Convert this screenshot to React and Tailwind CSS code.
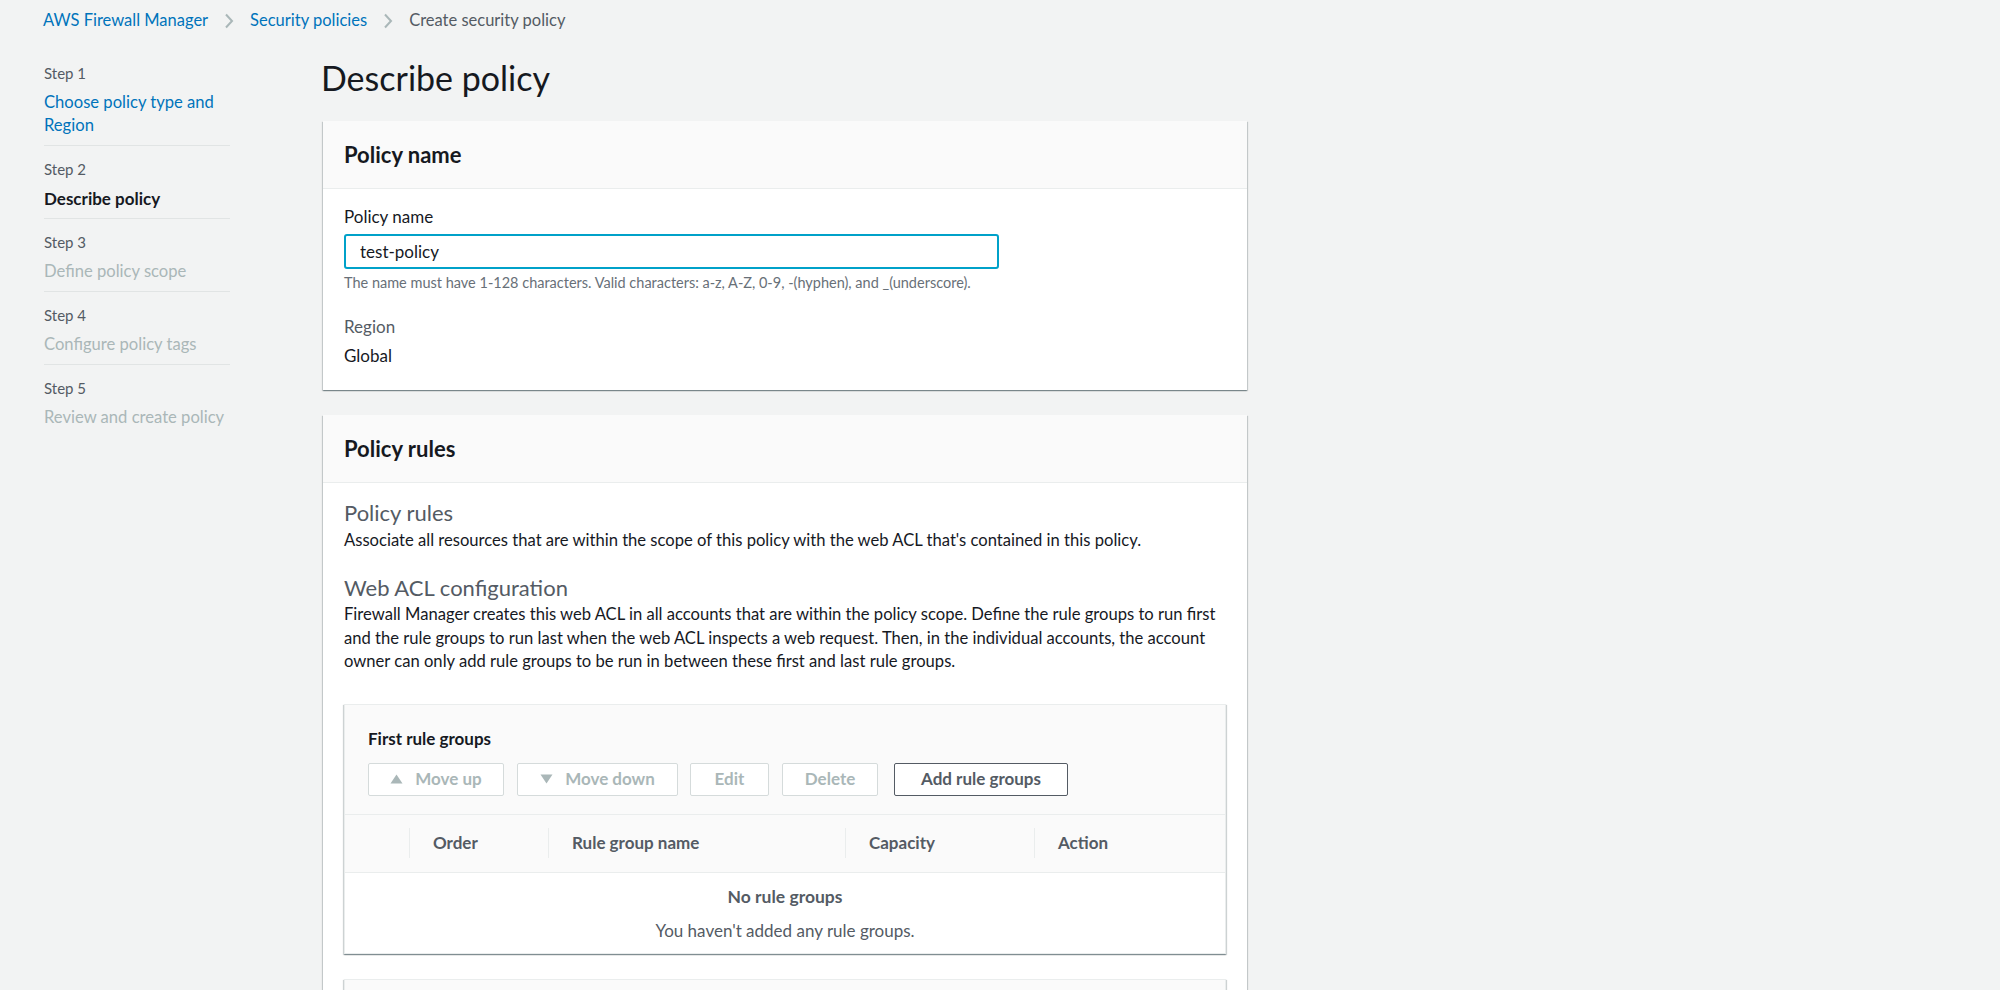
import React from 'react';

const cardShadow =
  'shadow-[0_1px_1px_0_rgba(0,28,36,0.3),1px_1px_1px_0_rgba(0,28,36,0.15),-1px_1px_1px_0_rgba(0,28,36,0.15)]';

const Chevron = () => (
  <svg width="10" height="16" viewBox="0 0 10 16" className="mx-[16px]" fill="none">
    <path d="M2 1.5 L8 8 L2 14.5" stroke="#aab7b8" strokeWidth="2" />
  </svg>
);

const TriangleUp = () => (
  <svg width="13" height="10" viewBox="0 0 13 10">
    <path d="M6.5 0.5 L12.5 9.5 L0.5 9.5 Z" fill="#aab7b8" />
  </svg>
);

const TriangleDown = () => (
  <svg width="13" height="10" viewBox="0 0 13 10">
    <path d="M0.5 0.5 L12.5 0.5 L6.5 9.5 Z" fill="#aab7b8" />
  </svg>
);

const steps = [
  { label: 'Step 1', title: 'Choose policy type and Region', state: 'link' },
  { label: 'Step 2', title: 'Describe policy', state: 'current' },
  { label: 'Step 3', title: 'Define policy scope', state: 'disabled' },
  { label: 'Step 4', title: 'Configure policy tags', state: 'disabled' },
  { label: 'Step 5', title: 'Review and create policy', state: 'disabled' },
];

const columns = [
  { name: '', width: 'w-[64px]' },
  { name: 'Order', width: 'w-[139px]' },
  { name: 'Rule group name', width: 'w-[297px]' },
  { name: 'Capacity', width: 'w-[189px]' },
  { name: 'Action', width: 'flex-1' },
];

const DisabledButton = ({ width, icon, children }) => (
  <button
    className={`${width} h-[33px] flex items-center justify-center gap-[12px] bg-white border border-[#d5dbdb] rounded-[2px] text-[17px] font-bold text-[#aab7b8]`}
  >
    {icon}
    <span>{children}</span>
  </button>
);

const RuleGroupTable = ({ title }) => (
  <div className={`bg-white border border-[#eaeded] ${cardShadow}`}>
    <div className="bg-[#fafafa] pt-[22px] px-[23px] pb-[18px] border-b border-[#eaeded]">
      <h3 className="text-[17px] leading-[23px] font-bold">{title}</h3>
      <div className="mt-[13px] flex items-center">
        <DisabledButton width="w-[136px]" icon={<TriangleUp />}>Move up</DisabledButton>
        <div className="ml-[13px]">
          <DisabledButton width="w-[161px]" icon={<TriangleDown />}>Move down</DisabledButton>
        </div>
        <div className="ml-[12px]">
          <DisabledButton width="w-[79px]">Edit</DisabledButton>
        </div>
        <div className="ml-[13px]">
          <DisabledButton width="w-[96px]">Delete</DisabledButton>
        </div>
        <button className="ml-[16px] w-[174px] h-[33px] flex items-center justify-center bg-white border border-[#545b64] rounded-[2px] text-[17px] font-bold text-[#545b64]">
          Add rule groups
        </button>
      </div>
    </div>
    <div className="flex h-[58px] bg-[#fafafa] border-b border-[#eaeded]">
      {columns.map((col, i) => (
        <div key={i} className={`${col.width} flex items-center`}>
          {i > 0 && <div className="w-px h-[30px] bg-[#eaeded]" />}
          {col.name && (
            <span className="ml-[23px] text-[17px] font-bold text-[#545b64]">{col.name}</span>
          )}
        </div>
      ))}
    </div>
    <div className="pt-[12px] pb-[11px] text-center text-[#545b64]">
      <div className="text-[17.5px] leading-[23px] font-bold">No rule groups</div>
      <div className="mt-[11px] text-[17px] leading-[23px]">You haven't added any rule groups.</div>
    </div>
  </div>
);

const Card = ({ title, children, className = '' }) => (
  <section className={`bg-white ${cardShadow} ${className}`}>
    <div className="h-[68px] flex items-center px-[21px] bg-[#fafafa] border-b border-[#eaeded]">
      <h2 className="text-[22px] font-bold">{title}</h2>
    </div>
    {children}
  </section>
);

export default function App() {
  return (
    <div className="min-h-screen bg-[#f2f3f3] text-[#16191f] font-['Lato','Noto_Sans',sans-serif]">
      {/* Breadcrumbs */}
      <nav className="flex items-center pl-[43px] pt-[9px] h-[32px] text-[16.5px] leading-[23px]">
        <a className="text-[#0073bb]">AWS Firewall Manager</a>
        <Chevron />
        <a className="text-[#0073bb]">Security policies</a>
        <Chevron />
        <span className="text-[#545b64]">Create security policy</span>
      </nav>

      <div className="flex items-start">
        {/* Wizard steps */}
        <aside className="ml-[44px] w-[186px] pt-[18px] shrink-0">
          {steps.map((s, i) => (
            <div
              key={s.label}
              className={`pt-[13px] pb-[8px] ${i < steps.length - 1 ? 'border-b border-[#e1e4e4]' : ''}`}
            >
              <div className="text-[15px] leading-[20px] text-[#545b64]">{s.label}</div>
              <div
                className={`mt-[8px] text-[16.6px] leading-[23px] ${
                  s.state === 'link'
                    ? 'text-[#0073bb]'
                    : s.state === 'current'
                    ? 'font-bold text-[17px] text-[#16191f]'
                    : 'text-[#aab7b8]'
                }`}
              >
                {s.title}
              </div>
            </div>
          ))}
        </aside>

        {/* Main content */}
        <main className="ml-[93px] w-[924px] pt-[25px] pb-[40px]">
          <h1 className="-ml-[2px] text-[34px] leading-[42px] font-normal">Describe policy</h1>

          <Card title="Policy name" className="mt-[22px]">
            <div className="px-[21px] pt-[16px] pb-[23px]">
              <label className="block text-[17px] leading-[23px]">Policy name</label>
              <input
                readOnly
                value="test-policy"
                className="mt-[6px] block w-[655px] h-[35px] px-[14px] border-2 border-[#00a1c9] rounded-[3px] text-[17px] text-[#16191f] outline-none"
              />
              <p className="mt-[4px] text-[14.5px] leading-[20px] text-[#687078]">
                The name must have 1-128 characters. Valid characters: a-z, A-Z, 0-9, -(hyphen), and _(underscore).
              </p>
              <div className="mt-[22px] text-[17px] leading-[23px] text-[#545b64]">Region</div>
              <div className="mt-[6px] text-[17px] leading-[23px]">Global</div>
            </div>
          </Card>

          <Card title="Policy rules" className="mt-[25px]">
            <div className="px-[21px] pt-[15px] pb-[24px]">
              <h3 className="text-[22px] leading-[29px] text-[#545b64]">Policy rules</h3>
              <p className="mt-[2px] text-[16.6px] leading-[23px]">
                Associate all resources that are within the scope of this policy with the web ACL that's contained in this policy.
              </p>
              <h3 className="mt-[21px] text-[22px] leading-[29px] text-[#545b64]">Web ACL configuration</h3>
              <p className="mt-[1px] text-[16.6px] leading-[23.5px]">
                Firewall Manager creates this web ACL in all accounts that are within the policy scope. Define the rule groups to run first and the rule groups to run last when the web ACL inspects a web request. Then, in the individual accounts, the account owner can only add rule groups to be run in between these first and last rule groups.
              </p>
              <div className="mt-[30px]">
                <RuleGroupTable title="First rule groups" />
              </div>
              <div className="mt-[25px]">
                <RuleGroupTable title="Last rule groups" />
              </div>
            </div>
          </Card>
        </main>
      </div>
    </div>
  );
}
